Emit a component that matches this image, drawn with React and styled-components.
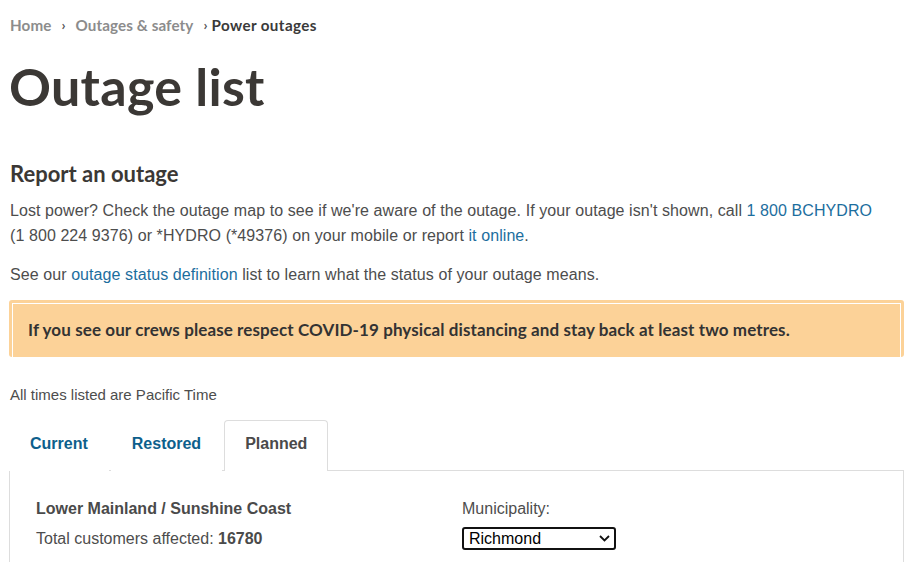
import React from "react";
import styled, { createGlobalStyle } from "styled-components";

const Global = createGlobalStyle`
  html, body { margin: 0; padding: 0; background: #fff; }
  body { font-family: "Liberation Sans", Arial, sans-serif; color: #4a4a4a; }
  * { box-sizing: border-box; }
`;

const Page = styled.div`
  width: 895px;
  margin-left: 9px;
  padding-top: 15px;
`;

const Breadcrumb = styled.nav`
  display: flex;
  align-items: center;
  font-family: Lato, "Open Sans", sans-serif;
  font-size: 15.2px;
  font-weight: 700;
  line-height: 20px;
  padding-left: 1px;
`;

const Crumb = styled.span`
  color: ${(p) => (p.$current ? "#3a3a3a" : "#8c8c8c")};
  letter-spacing: ${(p) => (p.$current ? "0.4px" : "0.1px")};
`;

const Sep = styled.span`
  color: #555;
  margin: 0 ${(p) => (p.$tight ? "4px" : "10px")} 0 ${(p) => (p.$tight ? "10px" : "10px")};
  font-size: 14px;
`;

const Title = styled.h1`
  font-family: Lato, "Open Sans", sans-serif;
  font-weight: 700;
  font-size: 52px;
  line-height: 60px;
  color: #3b3835;
  margin: 21px 0 0 0;
  letter-spacing: 0.3px;
`;

const H2 = styled.h2`
  font-family: Lato, "Open Sans", sans-serif;
  font-weight: 700;
  font-size: 22px;
  line-height: 28px;
  color: #3b3835;
  margin: 44px 0 0 1px;
`;

const P = styled.p`
  font-size: 16px;
  line-height: 25px;
  letter-spacing: 0.08px;
  margin: ${(p) => p.$mt || "10px"} 0 0 1px;
  color: #4d4d4d;
`;

const A = styled.a`
  color: #1c6e9e;
  text-decoration: none;
`;

const Alert = styled.div`
  margin-top: 13px;
  background: #fcd298;
  border-radius: 3px;
  padding: 3px 3px 0 3px;
  height: 57px;
`;

const AlertInner = styled.div`
  height: 100%;
  border: 1px solid #fff;
  border-bottom: none;
  display: flex;
  align-items: center;
  padding: 0 0 2px 15px;
  font-family: Lato, "Open Sans", sans-serif;
  font-weight: 700;
  font-size: 17px;
  letter-spacing: 0.1px;
  color: #333;
`;

const Note = styled.p`
  font-size: 15px;
  line-height: 20px;
  color: #4d4d4d;
  margin: 28px 0 0 1px;
`;

const Tabs = styled.div`
  display: flex;
  margin-top: 15px;
  height: 50px;
  position: relative;
  z-index: 1;
`;

const Tab = styled.div`
  height: 51px;
  padding: 0 20px 5px;
  margin-right: 2px;
  display: flex;
  align-items: center;
  font-size: 16px;
  font-weight: 700;
  color: ${(p) => (p.$active ? "#4a4a4a" : "#0d5f8c")};
  background: #fff;
  border: 1px solid ${(p) => (p.$active ? "#dddddd" : "transparent")};
  border-bottom: none;
  border-radius: 4px 4px 0 0;
`;

const Panel = styled.div`
  border: 1px solid #dddddd;
  padding: 28px 26px 40px 26px;
  display: grid;
  grid-template-columns: 426px 1fr;
`;

const Col = styled.div`
  display: flex;
  flex-direction: column;
`;

const Region = styled.div`
  font-size: 16px;
  font-weight: 700;
  line-height: 20px;
  color: #4a4a4a;
`;

const Line = styled.div`
  font-size: 16px;
  line-height: 20px;
  margin-top: 10px;
  color: #4d4d4d;
  b { color: #4a4a4a; }
`;

const Label = styled.label`
  font-size: 16px;
  line-height: 20px;
  color: #4d4d4d;
`;

const SelectWrap = styled.div`
  position: relative;
  width: 154px;
  margin-top: 8px;
`;

const Select = styled.select`
  display: block;
  appearance: none;
  -webkit-appearance: none;
  width: 154px;
  height: 23px;
  border: 2px solid #111;
  border-radius: 3px;
  font-family: "Liberation Sans", Arial, sans-serif;
  font-size: 16px;
  line-height: 19px;
  color: #000;
  padding: 0 24px 0 5px;
  background: #fff;
`;

const Chevron = styled.svg`
  position: absolute;
  right: 6px;
  top: 8px;
  pointer-events: none;
`;

export default function App() {
  return (
    <>
      <Global />
      <Page>
        <Breadcrumb>
          <Crumb>Home</Crumb>
          <Sep>›</Sep>
          <Crumb>Outages &amp; safety</Crumb>
          <Sep $tight>›</Sep>
          <Crumb $current>Power outages</Crumb>
        </Breadcrumb>
        <Title>Outage list</Title>
        <H2>Report an outage</H2>
        <P>
          Lost power? Check the outage map to see if we're aware of the outage. If your outage isn't shown, call{" "}
          <A href="#">1 800 BCHYDRO</A> (1{"\u00a0"}800{"\u00a0"}224{"\u00a0"}9376) or *HYDRO (*49376) on your mobile or report{" "}
          <A href="#">it online</A>.
        </P>
        <P $mt="14px">
          See our <A href="#">outage status definition</A> list to learn what the status of your outage means.
        </P>
        <Alert>
          <AlertInner>
            If you see our crews please respect COVID-19 physical distancing and stay back at least two metres.
          </AlertInner>
        </Alert>
        <Note>All times listed are Pacific Time</Note>
        <Tabs>
          <Tab>Current</Tab>
          <Tab>Restored</Tab>
          <Tab $active>Planned</Tab>
        </Tabs>
        <Panel>
          <Col>
            <Region>Lower Mainland / Sunshine Coast</Region>
            <Line>
              Total customers affected: <b>16780</b>
            </Line>
          </Col>
          <Col>
            <Label htmlFor="muni">Municipality:</Label>
            <SelectWrap>
              <Select id="muni" defaultValue="Richmond">
                <option>Richmond</option>
              </Select>
              <Chevron width="11" height="7" viewBox="0 0 11 7">
                <path d="M1 1 L5.5 5.5 L10 1" fill="none" stroke="#111" strokeWidth="1.8" />
              </Chevron>
            </SelectWrap>
          </Col>
        </Panel>
      </Page>
    </>
  );
}
